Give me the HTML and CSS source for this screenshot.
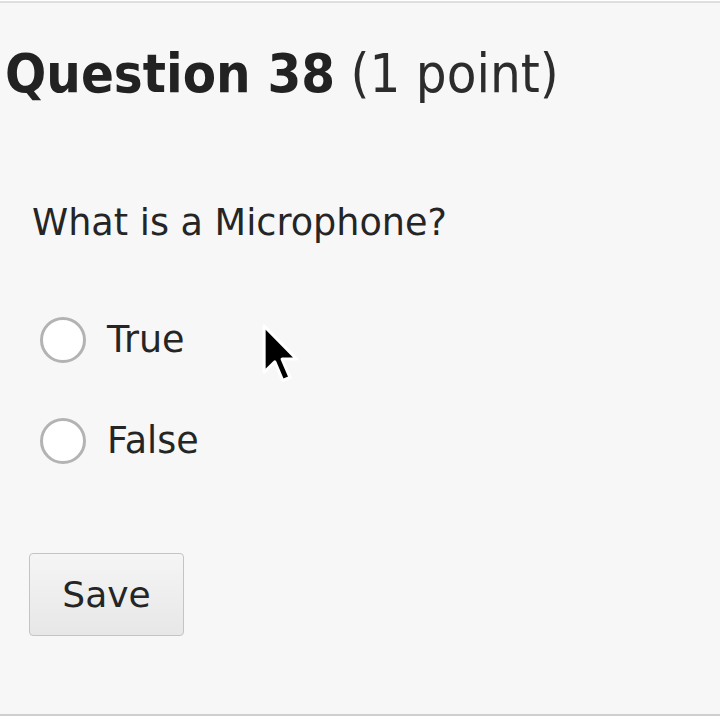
FILE: index.html
```html
<!DOCTYPE html>
<html>
<head>
<meta charset="utf-8">
<link rel="stylesheet" href="styles.css">
</head>
<body>
<div class="page">
  <h1 class="q-title"><strong class="q-num">Question 38</strong> <span class="q-pts">(1 point)</span></h1>
  <p class="q-text">What is a Microphone?</p>
  <div class="options">
    <label class="opt"><span class="radio"></span><span class="opt-label">True</span></label>
    <label class="opt"><span class="radio"></span><span class="opt-label">False</span></label>
  </div>
  <button class="save" type="button">Save</button>
  <svg class="cursor" width="40" height="62" viewBox="0 0 14 22" xmlns="http://www.w3.org/2000/svg">
    <polygon points="1,1 1,17.5 4.8,13.8 7.6,20.4 10.2,19.3 7.4,12.8 12.6,12.8" fill="#000" stroke="#fff" stroke-width="1.1" stroke-linejoin="round"/>
  </svg>
</div>
</body>
</html>
```
FILE: styles.css
```css
html, body {
  margin: 0;
  padding: 0;
  background: #ffffff;
}
.page {
  position: relative;
  margin-top: 1px;
  height: 711px;
  background: #f7f7f7;
  border-top: 2px solid #e0dfe0;
  border-bottom: 2px solid #cfcfcf;
  font-family: "DejaVu Sans", Verdana, sans-serif;
  color: #252525;
  overflow: hidden;
}
.q-title {
  margin: 41px 0 0 5px;
  font-family: "DejaVu Sans Condensed", "DejaVu Sans", sans-serif;
  font-stretch: condensed;
  font-size: 54px;
  line-height: 60px;
  font-weight: normal;
  white-space: nowrap;
}
.q-num {
  font-weight: bold;
  color: #222;
}
.q-pts {
  color: #2c2c2c;
}
.q-text {
  margin: 97px 0 0 32px;
  font-size: 36.6px;
  line-height: 44px;
}
.options {
  margin: 70px 0 0 40px;
  display: flex;
  flex-direction: column;
  gap: 51px;
}
.opt {
  display: flex;
  align-items: center;
  height: 50px;
  gap: 21px;
  font-size: 36.5px;
  line-height: 44px;
}
.radio {
  box-sizing: border-box;
  width: 46px;
  height: 46px;
  border-radius: 50%;
  border: 3px solid #b3b3b3;
  background: #ffffff;
  flex: none;
}
.save {
  display: block;
  box-sizing: border-box;
  margin: 87px 0 0 29px;
  width: 155px;
  height: 83px;
  padding: 0;
  border: 1px solid #c4c4c4;
  border-radius: 4px;
  background: linear-gradient(#f5f5f5, #e7e7e7);
  font-family: "DejaVu Sans", Verdana, sans-serif;
  font-size: 36px;
  line-height: 44px;
  color: #252525;
}
.cursor {
  position: absolute;
  left: 261px;
  top: 320px;
}
```
